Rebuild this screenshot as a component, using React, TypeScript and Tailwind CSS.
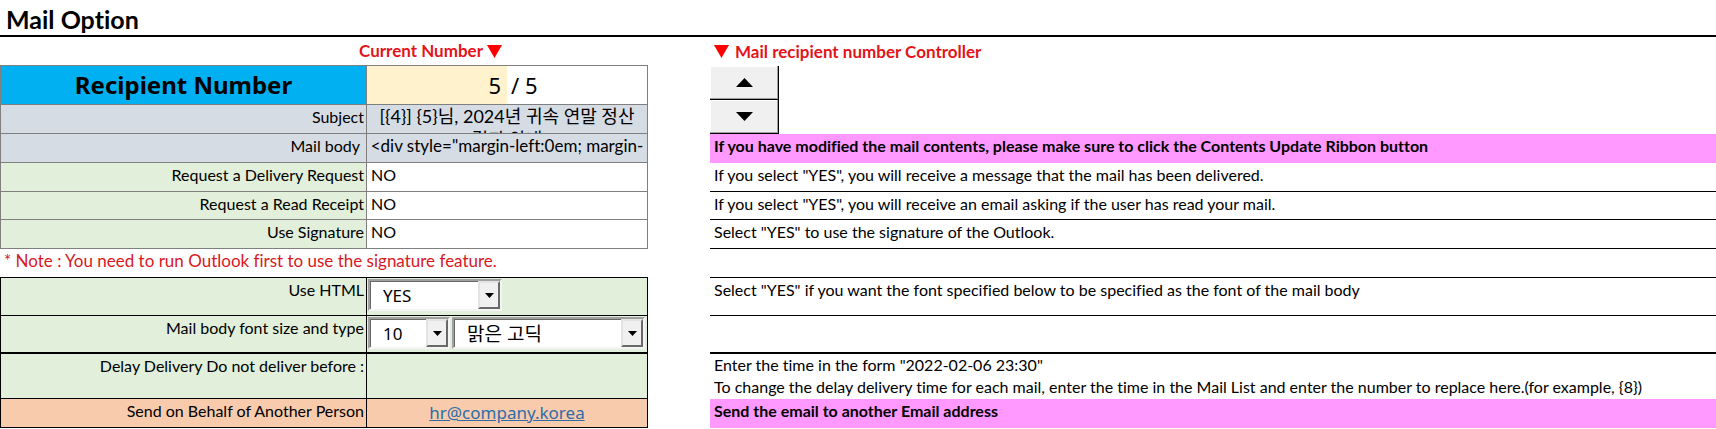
import type { ReactNode } from "react";

const black = "border-black";
const gray = "border-[#7f7f7f]";

function Label({ id, tone, line, children }: { id?: string; tone: string; line: string; children: ReactNode }) {
  return (
    <th scope="row" className={`border-x border-b py-0 pr-0.5 pl-1 text-right align-top font-normal ${line} ${tone}`}>
      <label htmlFor={id} className="block leading-6">{children}</label>
    </th>
  );
}

function Note({ line = "border-b border-black", children }: { line?: string; children?: ReactNode }) {
  return <td className={`px-1 py-0 align-top leading-6 ${line}`}>{children}</td>;
}

function Gap() {
  return <td className="p-0" />;
}

function TextCell({ id, value }: { id: string; value: string }) {
  return (
    <td className={`border-r border-b p-0 align-top ${gray}`}>
      <input id={id} defaultValue={value} className="block h-6 w-full bg-transparent px-1 outline-none" />
    </td>
  );
}

function Combo({ id, label, options, width, text = "text-[17px]" }: { id: string; label: string; options: string[]; width: string; text?: string }) {
  return (
    <div className={`relative h-8 border-2 border-t-[#a0a0a0] border-r-[#f4f4f4] border-b-[#f4f4f4] border-l-[#a0a0a0] ${width}`}>
      <select
        id={id}
        aria-label={label}
        className={`block h-full w-full appearance-none border-t border-l border-[#696969] bg-white pl-3 font-['Noto_Sans','Noto_Sans_CJK_KR',sans-serif] leading-6 outline-none ${text}`}
      >
        {options.map((o) => (
          <option key={o}>{o}</option>
        ))}
      </select>
      <span className="pointer-events-none absolute inset-y-0 right-0 flex w-[22px] items-center justify-center border-2 border-t-[#e3e3e3] border-r-[#696969] border-b-[#696969] border-l-[#e3e3e3] bg-[#f0f0f0]">
        <svg width="9" height="5" viewBox="0 0 9 5" aria-hidden="true">
          <path d="M0 0h9L4.500 5z" />
        </svg>
      </span>
    </div>
  );
}

function Down() {
  return (
    <svg width="15" height="13" viewBox="0 0 15 13" className="inline-block shrink-0" aria-hidden="true">
      <path d="M0 0h15L7.500 13z" fill="#ff0000" />
    </svg>
  );
}

function Spin({ label, d }: { label: string; d: string }) {
  return (
    <button
      type="button"
      aria-label={label}
      className="flex h-[34px] w-full items-center justify-center border-r border-b border-black bg-[#f0f0f0] shadow-[inset_-1px_-1px_0_#a0a0a0,inset_1px_1px_0_#ffffff]"
    >
      <svg width="17" height="9" viewBox="0 0 17 9" aria-hidden="true">
        <path d={d} />
      </svg>
    </button>
  );
}

export default function App() {
  return (
    <main className="bg-white font-['Lato','Noto_Sans_CJK_KR',sans-serif] text-base text-black [font-variant-ligatures:none]">
      <h1 className="h-[37px] border-b-2 border-black px-1.5 text-[25px] leading-[38px] font-bold">Mail Option</h1>
      <table className="w-full table-fixed border-separate border-spacing-0">
        <colgroup>
          <col className="w-[367px]" />
          <col className="w-[281px]" />
          <col className="w-[62px]" />
          <col />
        </colgroup>
        <tbody>
          <tr className="h-[29px] text-[17px] leading-6 font-bold text-[#e3131a]">
            <td colSpan={2} className={`border-b p-0 ${gray}`}>
              <div className="flex items-center justify-end gap-1 pr-[146px]">
                Current Number <Down />
              </div>
            </td>
            <Gap />
            <td className="p-0">
              <div className="flex items-center gap-1.5 pl-1">
                <Down /> Mail recipient number Controller
              </div>
            </td>
          </tr>
          <tr className="h-[39px]">
            <th
              scope="row"
              className={`border-x border-b bg-[#00b0f0] p-0 font-['Noto_Sans',sans-serif] text-2xl leading-8 font-bold ${gray}`}
            >
              <label htmlFor="recipient">Recipient Number</label>
            </th>
            <td className={`border-r border-b p-0 ${gray}`}>
              <div className="flex h-[38px] items-center font-['Noto_Sans',sans-serif] text-[22px]">
                <input
                  id="recipient"
                  defaultValue="5"
                  className="h-full w-[140px] bg-[#fff2cc] pr-1.5 text-right outline-none"
                />
                <span className="pl-1">/ 5</span>
              </div>
            </td>
            <Gap />
            <td rowSpan={2} className="p-0 align-top">
              <div className="w-[69px]">
                <Spin label="Next recipient" d="M0 9h17L8.500 0z" />
                <Spin label="Previous recipient" d="M0 0h17L8.500 9z" />
              </div>
            </td>
          </tr>
          <tr className="h-[29px]">
            <Label tone="bg-[#d6dce4]" line={gray}>Subject</Label>
            <td className={`border-r border-b bg-[#d6dce4] p-0 align-top ${gray}`}>
              <div className="h-7 overflow-hidden text-center text-lg leading-[23px]">
                [{"{4}"}] {"{5}"}님, 2024년 귀속 연말 정산
                <br />
                결과 안내
              </div>
            </td>
            <Gap />
          </tr>
          <tr className="h-[29px]">
            <Label tone="bg-[#d6dce4]" line={gray}><span className="pr-1">Mail body</span></Label>
            <td className={`border-r border-b bg-[#d6dce4] p-0 align-top ${gray}`}>
              <div className="overflow-hidden text-center text-[17px] leading-6 whitespace-nowrap">
                {'<div style="margin-left:0em; margin-'}
              </div>
            </td>
            <Gap />
            <Note line="bg-[#ff99ff] font-bold">
              If you have modified the mail contents, please make sure to click the Contents Update Ribbon button
            </Note>
          </tr>
          <tr className="h-[29px]">
            <Label id="delivery" tone="bg-[#e2efda]" line={gray}>Request a Delivery Request</Label>
            <TextCell id="delivery" value="NO" />
            <Gap />
            <Note>If you select "YES", you will receive a message that the mail has been delivered.</Note>
          </tr>
          <tr className="h-[28px]">
            <Label id="receipt" tone="bg-[#e2efda]" line={gray}>Request a Read Receipt</Label>
            <TextCell id="receipt" value="NO" />
            <Gap />
            <Note>If you select "YES", you will receive an email asking if the user has read your mail.</Note>
          </tr>
          <tr className="h-[29px]">
            <Label id="signature" tone="bg-[#e2efda]" line={gray}>Use Signature</Label>
            <TextCell id="signature" value="NO" />
            <Gap />
            <Note>Select "YES" to use the signature of the Outlook.</Note>
          </tr>
          <tr className="h-[29px]">
            <td colSpan={2} className={`border-b px-1 py-0 align-top text-[17px] leading-6 text-[#d8171e] ${black}`}>
              * Note : You need to run Outlook first to use the signature feature.
            </td>
            <Gap />
            <Note />
          </tr>
          <tr className="h-[38px]">
            <Label id="html" tone="bg-[#e2efda]" line={black}>Use HTML</Label>
            <td className={`border-r border-b bg-[#e2efda] p-0 px-px pt-px align-top ${black}`}>
              <Combo id="html" label="Use HTML" options={["YES", "NO"]} width="w-[134px]" />
            </td>
            <Gap />
            <Note>Select "YES" if you want the font specified below to be specified as the font of the mail body</Note>
          </tr>
          <tr className="h-[38px]">
            <Label id="size" tone="bg-[#e2efda]" line="border-black border-b-2">Mail body font size and type</Label>
            <td className="border-r border-b-2 border-black bg-[#e2efda] p-0 px-px pt-px align-top">
              <div className="flex gap-0.5">
                <Combo id="size" label="Font size" options={["10", "11", "12"]} width="w-[82px]" />
                <Combo id="family" label="Font type" options={["맑은 고딕", "굴림"]} width="w-[193px]" text="text-[19px]" />
              </div>
            </td>
            <Gap />
            <Note line="border-b-2 border-black" />
          </tr>
          <tr className="h-[45px]">
            <Label id="delay" tone="bg-[#e2efda]" line={black}>Delay Delivery Do not deliver before :</Label>
            <td className={`border-r border-b bg-[#e2efda] p-0 ${black}`}>
              <input id="delay" className="block h-10 w-full bg-transparent px-1 outline-none" />
            </td>
            <Gap />
            <td className="px-1 py-0 align-top leading-[22px]">
              <p>Enter the time in the form "2022-02-06 23:30"</p>
              <p>
                To change the delay delivery time for each mail, enter the time in the Mail List and enter the number to
                replace here.(for example, {"{8}"})
              </p>
            </td>
          </tr>
          <tr className="h-[29px]">
            <Label tone="bg-[#f8cbad]" line={black}>Send on Behalf of Another Person</Label>
            <td className={`border-r border-b bg-[#f8cbad] p-0 text-center ${black}`}>
              <a href="mailto:hr@company.korea" className="font-['Noto_Sans',sans-serif] text-[17px] leading-6 text-[#2e6da8] underline">
                hr@company.korea
              </a>
            </td>
            <Gap />
            <Note line="bg-[#ff99ff] font-bold">Send the email to another Email address</Note>
          </tr>
        </tbody>
      </table>
    </main>
  );
}
